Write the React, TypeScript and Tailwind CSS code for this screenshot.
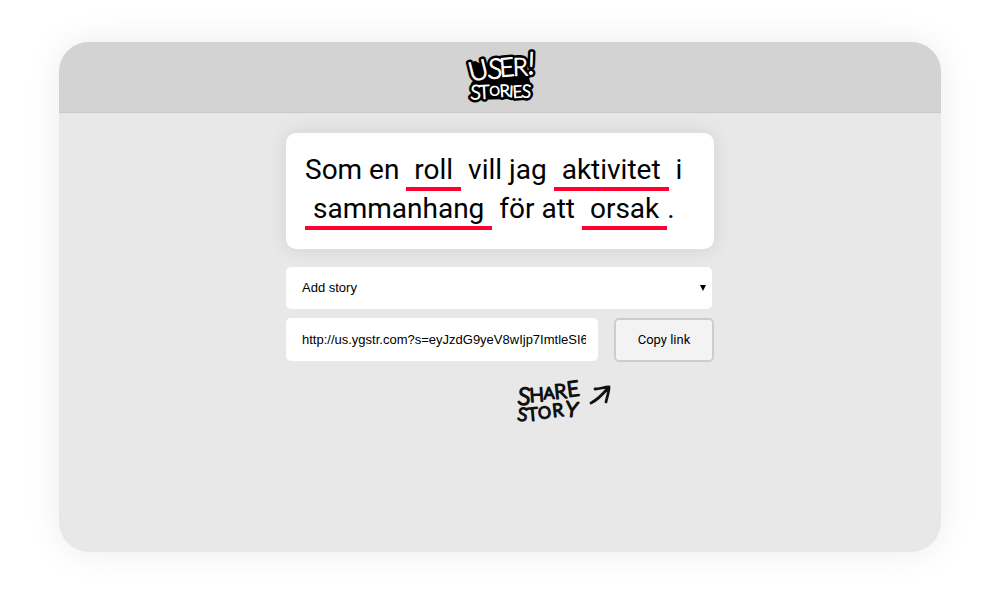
import { useState, type ReactNode } from "react";

const SHARE_URL =
  "http://us.ygstr.com?s=eyJzdG9yeV8wIjp7ImtleSI6IlJvbGwiLCJ2YWx1ZSI6IiJ9fQ";

type Glyph = { c: string; x: number; y: number; size: number; turn: number };

const logoGlyphs: Glyph[] = [
  { c: "U", x: 11, y: 40, size: 27, turn: -14 },
  { c: "S", x: 27, y: 36, size: 28, turn: 4 },
  { c: "E", x: 40, y: 35, size: 26, turn: -5 },
  { c: "R", x: 53, y: 34, size: 25, turn: -2 },
  { c: "!", x: 67, y: 32, size: 31, turn: 2 },
  { c: "S", x: 10, y: 57, size: 20, turn: 3 },
  { c: "T", x: 19, y: 57, size: 19, turn: -3 },
  { c: "O", x: 30, y: 54, size: 13, turn: -6 },
  { c: "R", x: 40, y: 55, size: 17, turn: -4 },
  { c: "I", x: 49, y: 55, size: 16, turn: 3 },
  { c: "E", x: 53, y: 56, size: 17, turn: -4 },
  { c: "S", x: 61, y: 55, size: 18, turn: 6 },
];

const shareGlyphs: Glyph[] = [
  { c: "S", x: 5, y: 34, size: 24, turn: 6 },
  { c: "H", x: 18, y: 32, size: 19, turn: -4 },
  { c: "A", x: 32, y: 29, size: 16, turn: -3 },
  { c: "R", x: 43, y: 29, size: 20, turn: -6 },
  { c: "E", x: 56, y: 27, size: 21, turn: -8 },
  { c: "S", x: 5, y: 50, size: 18, turn: 8 },
  { c: "T", x: 16, y: 51, size: 18, turn: -5 },
  { c: "O", x: 27, y: 49, size: 16, turn: -8 },
  { c: "R", x: 41, y: 47, size: 18, turn: -6 },
  { c: "Y", x: 53, y: 46, size: 21, turn: 6 },
];

function Lettering({ glyphs, className }: { glyphs: Glyph[]; className: string }) {
  return (
    <g className={className} strokeLinejoin="round" strokeLinecap="round">
      {glyphs.map((g, i) => (
        <text key={i} fontSize={g.size} transform={`translate(${g.x} ${g.y}) rotate(${g.turn})`}>
          {g.c}
        </text>
      ))}
    </g>
  );
}

function Logo() {
  return (
    <svg
      role="img"
      aria-label="User! Stories"
      viewBox="0 0 80 70"
      className="h-[70px] w-20 font-['Lato',sans-serif] font-light"
    >
      <path
        d="M15 21 24 26 38 16 64 17 67 36 69 43 66 54 50 55 13 56 13 42 17 38Z"
        className="fill-black stroke-black stroke-[4]"
        strokeLinejoin="round"
      />
      <Lettering glyphs={logoGlyphs} className="fill-black stroke-black stroke-[6]" />
      <Lettering glyphs={logoGlyphs} className="fill-white stroke-white stroke-[0.9]" />
    </svg>
  );
}

function ShareNote() {
  return (
    <svg
      role="img"
      aria-label="Share story"
      viewBox="0 0 104 60"
      className="h-15 w-26 font-['Lato',sans-serif] font-light"
    >
      <Lettering glyphs={shareGlyphs} className="fill-[#111] stroke-[#111] stroke-[1.8]" />
      <path
        d="M79 33C85 30 91 24 96 18M83 19C88 19 92 17 97 17C97 22 95 27 94 32"
        className="fill-none stroke-[#111] stroke-[2.8]"
        strokeLinecap="round"
        strokeLinejoin="round"
      />
    </svg>
  );
}

function Slot({ children }: { children: ReactNode }) {
  return <span className="border-b-4 border-[#ff0030] px-2 pb-px">{children}</span>;
}

export default function App() {
  const [story, setStory] = useState("");
  return (
    <div className="flex min-h-screen bg-white px-[59px] py-[42px] font-['Roboto',sans-serif] text-black">
      <div className="flex grow flex-col overflow-hidden rounded-[30px] bg-[#e8e8e8] shadow-[0_0_36px_rgba(0,0,0,0.08)]">
        <header className="flex justify-center border-b border-[#c8c8c8] bg-[#d3d3d3]">
          <Logo />
        </header>
        <main className="mx-auto flex w-full max-w-[428px] flex-col pt-5">
          <p className="rounded-[10px] bg-white px-[19px] pt-[17px] pb-[21px] text-[28px] leading-[39px] shadow-[0_0_20px_rgba(0,0,0,0.1)]">
            Som en <Slot>roll</Slot> vill jag <Slot>aktivitet</Slot> i <Slot>sammanhang</Slot> för att{" "}
            <Slot>orsak</Slot>.
          </p>
          <div className="relative mt-[18px] mr-0.5">
            <select
              aria-label="Add story"
              value={story}
              onChange={(e) => setStory(e.target.value)}
              className="h-[42px] w-full appearance-none rounded-[5px] bg-white px-4 font-['Liberation_Sans',sans-serif] text-[13px]"
            >
              <option value="">Add story</option>
              <option value="user">User story</option>
            </select>
            <svg viewBox="0 0 6 6" className="pointer-events-none absolute top-[18px] right-1.5 size-1.5">
              <path d="M0 0H6L3 6Z" />
            </svg>
          </div>
          <div className="mt-[9px] flex items-start gap-4">
            <div className="flex min-w-0 grow rounded-[5px] bg-white pr-3 pl-4">
              <input
                aria-label="Story link"
                readOnly
                value={SHARE_URL}
                className="h-[43px] w-full bg-transparent font-['Liberation_Sans',sans-serif] text-[13px] outline-none"
              />
            </div>
            <button
              type="button"
              onClick={() => navigator.clipboard?.writeText(SHARE_URL)}
              className="h-11 w-[100px] shrink-0 rounded-[5px] border-2 border-[#ccc] bg-[#f3f3f3] text-[13px]"
            >
              Copy link
            </button>
          </div>
          <div className="mt-2 mr-[98px] self-end">
            <ShareNote />
          </div>
        </main>
      </div>
    </div>
  );
}
